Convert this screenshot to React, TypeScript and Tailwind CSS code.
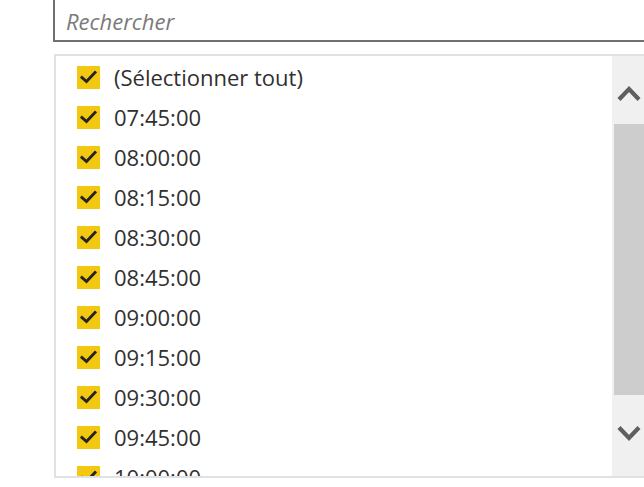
import React from "react";

const TIMES = [
  "(Sélectionner tout)",
  "07:45:00",
  "08:00:00",
  "08:15:00",
  "08:30:00",
  "08:45:00",
  "09:00:00",
  "09:15:00",
  "09:30:00",
  "09:45:00",
  "10:00:00",
];

const CheckBox = () => (
  <div className="w-[23px] h-[23px] bg-[#f2c811] flex items-center justify-center shrink-0">
    <svg width="17" height="14" viewBox="0 0 17 14" fill="none">
      <path d="M2 7.5 L6.5 11.5 L15 2.5" stroke="#252423" strokeWidth="3" strokeLinecap="square" />
    </svg>
  </div>
);

const Chevron = ({ up }: { up?: boolean }) => (
  <svg width="24" height="18" viewBox="0 0 24 18" fill="none">
    <path
      d={up ? "M2 15.5 L12 5 L22 15.5" : "M2 2.5 L12 13 L22 2.5"}
      stroke="#5f5f5f"
      strokeWidth="4.2"
    />
  </svg>
);

export default function App() {
  return (
    <div
      className="w-[644px] h-[487px] bg-white overflow-hidden"
      style={{ fontFamily: '"Open Sans", "Noto Sans", sans-serif' }}
    >
      <div className="ml-[53px] w-[600px] h-[42px] border-l-2 border-b-2 border-[#707070] flex items-end pb-[8px] pl-[11px]">
        <span className="text-[22px] italic text-[#7a7a7a] leading-none">Rechercher</span>
      </div>

      <div className="ml-[54px] mt-[12px] w-[600px] h-[424px] border-2 border-[#dfe2e5] flex overflow-hidden">
        <div className="w-[556px] pt-[1px] flex flex-col overflow-hidden">
          {TIMES.map((t) => (
            <div key={t} className="h-[40px] shrink-0 flex items-center pl-[21px] gap-[14px]">
              <CheckBox />
              <span className="text-[22px] text-[#303030] leading-none whitespace-nowrap">{t}</span>
            </div>
          ))}
        </div>
        <div className="w-[32px] h-full bg-[#f0f0f0] flex flex-col">
          <div className="h-[68px] flex items-center justify-center pl-[1px] pt-[6px]">
            <Chevron up />
          </div>
          <div className="ml-[2px] h-[271px] bg-[#cdcdcd]" />
          <div className="flex-1 flex items-center justify-center pl-[1px] pb-[4px]">
            <Chevron />
          </div>
        </div>
      </div>
    </div>
  );
}
